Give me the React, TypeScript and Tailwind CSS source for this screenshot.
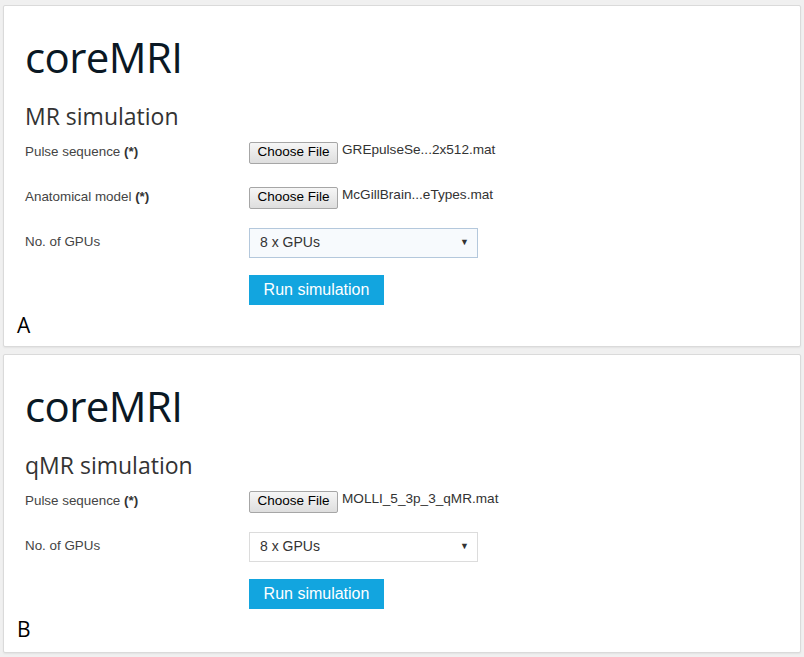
import React from "react"

const sans = { fontFamily: "'Liberation Sans', Arial, sans-serif" }
const open = { fontFamily: "'Open Sans', 'Noto Sans', sans-serif" }

function Label({ text, req }: { text: string; req?: boolean }) {
  return (
    <div className="w-[224px] text-[13.4px] text-[#444]" style={sans}>
      {text}
      {req && <span className="font-bold text-[#333]"> (*)</span>}
    </div>
  )
}

function FileInput({ name }: { name: string }) {
  return (
    <div className="flex items-center" style={sans}>
      <span className="flex h-[22px] w-[89px] items-center justify-center rounded-[2px] border border-[#a6a6a6] bg-gradient-to-b from-[#f6f6f6] to-[#dedede] text-[13.5px] text-black">
        Choose File
      </span>
      <span className="-mt-[4px] ml-[4px] text-[13.6px] text-[#333]">{name}</span>
    </div>
  )
}

function GpuSelect({ focused }: { focused?: boolean }) {
  return (
    <div
      className={
        focused
          ? "flex h-[30px] w-[229px] items-center justify-between border border-[#b4c8dc] bg-[#f7fafd] pl-[10px] pr-[8px]"
          : "flex h-[30px] w-[229px] items-center justify-between border border-[#dcdcdc] bg-white pl-[10px] pr-[8px]"
      }
      style={sans}
    >
      <span className="text-[14px] text-[#333]">8 x GPUs</span>
      <span className="text-[9px] text-[#333]">▼</span>
    </div>
  )
}

function Row({ children }: { children: React.ReactNode }) {
  return <div className="flex h-[45px] items-center">{children}</div>
}

function Panel({
  heading,
  letter,
  anatomical,
  pulseFile,
  focused,
  pb,
}: {
  heading: string
  letter: string
  anatomical?: boolean
  pulseFile: string
  focused?: boolean
  pb: string
}) {
  return (
    <div
      className={
        "mx-[3px] rounded-[2px] border border-[#dadada] bg-white pl-[21px] pt-[27px] shadow-[0_1px_2px_rgba(0,0,0,0.06)] " +
        pb
      }
    >
      <h1
        className="text-[42px] font-medium leading-[48px] tracking-[-0.6px] text-[#0a1824]"
        style={open}
      >
        coreMRI
      </h1>
      <h2 className="mt-[21px] text-[23px] leading-[28px] text-[#333]" style={open}>
        {heading}
      </h2>
      <Row>
        <Label text="Pulse sequence" req />
        <FileInput name={pulseFile} />
      </Row>
      {anatomical && (
        <Row>
          <Label text="Anatomical model" req />
          <FileInput name="McGillBrain...eTypes.mat" />
        </Row>
      )}
      <Row>
        <Label text="No. of GPUs" />
        <GpuSelect focused={focused} />
      </Row>
      <div className="ml-[224px] mt-[10px] flex">
        <button
          className="h-[30px] w-[135px] bg-[#12a5df] text-[16px] text-white"
          style={sans}
        >
          Run simulation
        </button>
      </div>
      <div className="-ml-[8px] mt-[8px] text-[21px] leading-[24px] text-black" style={open}>
        {letter}
      </div>
    </div>
  )
}

export default function App() {
  return (
    <div className="h-[657px] w-[804px] overflow-hidden bg-[#f0f0f0] pt-[5px]">
      <Panel
        heading="MR simulation"
        letter="A"
        anatomical
        pulseFile="GREpulseSe...2x512.mat"
        focused
        pb="pb-[9px]"
      />
      <div className="h-[7px]" />
      <Panel
        heading="qMR simulation"
        letter="B"
        pulseFile="MOLLI_5_3p_3_qMR.mat"
        pb="pb-[11px]"
      />
    </div>
  )
}
